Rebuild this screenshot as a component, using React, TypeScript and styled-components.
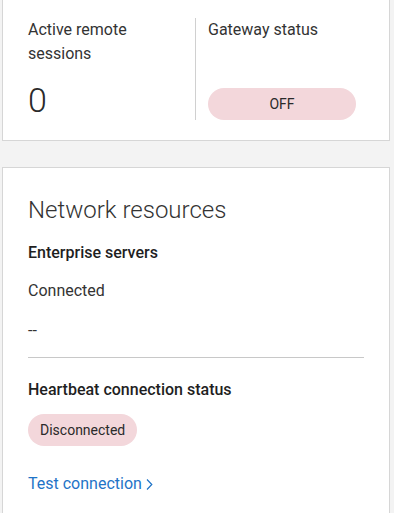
import styled, { createGlobalStyle } from "styled-components";

const GlobalStyle = createGlobalStyle`
  html, body {
    margin: 0;
    padding: 0;
    background: #f3f3f3;
  }
  body {
    font-family: Roboto, "Noto Sans", "Liberation Sans", sans-serif;
    color: #262626;
  }
  * {
    box-sizing: border-box;
  }
`;

const Page = styled.div`
  padding: 0 4px 2px 2px;
  display: flex;
  flex-direction: column;
  gap: 26px;
`;

const Card = styled.section<{ $clipTop?: boolean }>`
  background: #ffffff;
  border: 1px solid #d6d6d6;
  border-top: ${(p) => (p.$clipTop ? "none" : "1px solid #d6d6d6")};
  width: 388px;
`;

const StatsCard = styled(Card)`
  padding: 18px 24px 20px 25px;
  display: grid;
  grid-template-columns: 167px 1px 1fr;
`;

const StatColumn = styled.div<{ $right?: boolean }>`
  display: flex;
  flex-direction: column;
  padding-left: ${(p) => (p.$right ? "12px" : "0")};
`;

const VerticalRule = styled.div`
  background: #d0d0d0;
`;

const StatLabel = styled.div`
  font-size: 16px;
  line-height: 24px;
  color: #333;
  width: 140px;
`;

const StatValue = styled.div`
  margin-top: 14px;
  font-size: 34px;
  line-height: 40px;
  font-weight: 300;
  color: #2a2a2a;
`;

const Pill = styled.div<{ $wide?: boolean }>`
  display: inline-flex;
  align-items: center;
  justify-content: center;
  height: 32px;
  border-radius: 16px;
  background: #f3d7db;
  color: #2a2a2a;
  font-size: 14px;
  width: ${(p) => (p.$wide ? "148px" : "auto")};
  padding: ${(p) => (p.$wide ? "0" : "0 12px")};
  align-self: flex-start;
`;

const PushedPill = styled(Pill)`
  margin-top: auto;
`;

const ResourcesCard = styled(Card)`
  padding: 26px 25px 17px 25px;
  display: flex;
  flex-direction: column;
`;

const CardTitle = styled.h2`
  margin: 0;
  font-size: 24px;
  line-height: 32px;
  font-weight: 300;
  color: #333;
`;

const SectionTitle = styled.h3<{ $gap: number }>`
  margin: ${(p) => p.$gap}px 0 0;
  font-size: 16px;
  line-height: 24px;
  font-weight: 500;
  color: #1f1f1f;
`;

const Text = styled.div<{ $gap: number }>`
  margin-top: ${(p) => p.$gap}px;
  font-size: 16px;
  line-height: 24px;
  color: #333;
`;

const Rule = styled.hr`
  border: none;
  border-top: 1px solid #c8c8c8;
  margin: 14px 0 0;
`;

const StatusPill = styled(Pill)`
  margin-top: 12px;
`;

const Link = styled.a`
  margin-top: 26px;
  display: inline-flex;
  align-items: center;
  gap: 4px;
  font-size: 16px;
  line-height: 24px;
  color: #1f74c7;
  text-decoration: none;
  align-self: flex-start;
  cursor: pointer;
`;

const Chevron = () => (
  <svg width="7" height="13" viewBox="0 0 7 13" fill="none">
    <path d="M1 1.5 L5.8 6.5 L1 11.5" stroke="#1f74c7" strokeWidth="1.2" />
  </svg>
);

export default function App() {
  return (
    <>
      <GlobalStyle />
      <Page>
        <StatsCard $clipTop>
          <StatColumn>
            <StatLabel>Active remote sessions</StatLabel>
            <StatValue>0</StatValue>
          </StatColumn>
          <VerticalRule />
          <StatColumn $right>
            <StatLabel>Gateway status</StatLabel>
            <PushedPill $wide>OFF</PushedPill>
          </StatColumn>
        </StatsCard>

        <ResourcesCard>
          <CardTitle>Network resources</CardTitle>
          <SectionTitle $gap={15}>Enterprise servers</SectionTitle>
          <Text $gap={14}>Connected</Text>
          <Text $gap={16}>--</Text>
          <Rule />
          <SectionTitle $gap={20}>Heartbeat connection status</SectionTitle>
          <StatusPill>Disconnected</StatusPill>
          <Link>
            Test connection
            <Chevron />
          </Link>
        </ResourcesCard>
      </Page>
    </>
  );
}
